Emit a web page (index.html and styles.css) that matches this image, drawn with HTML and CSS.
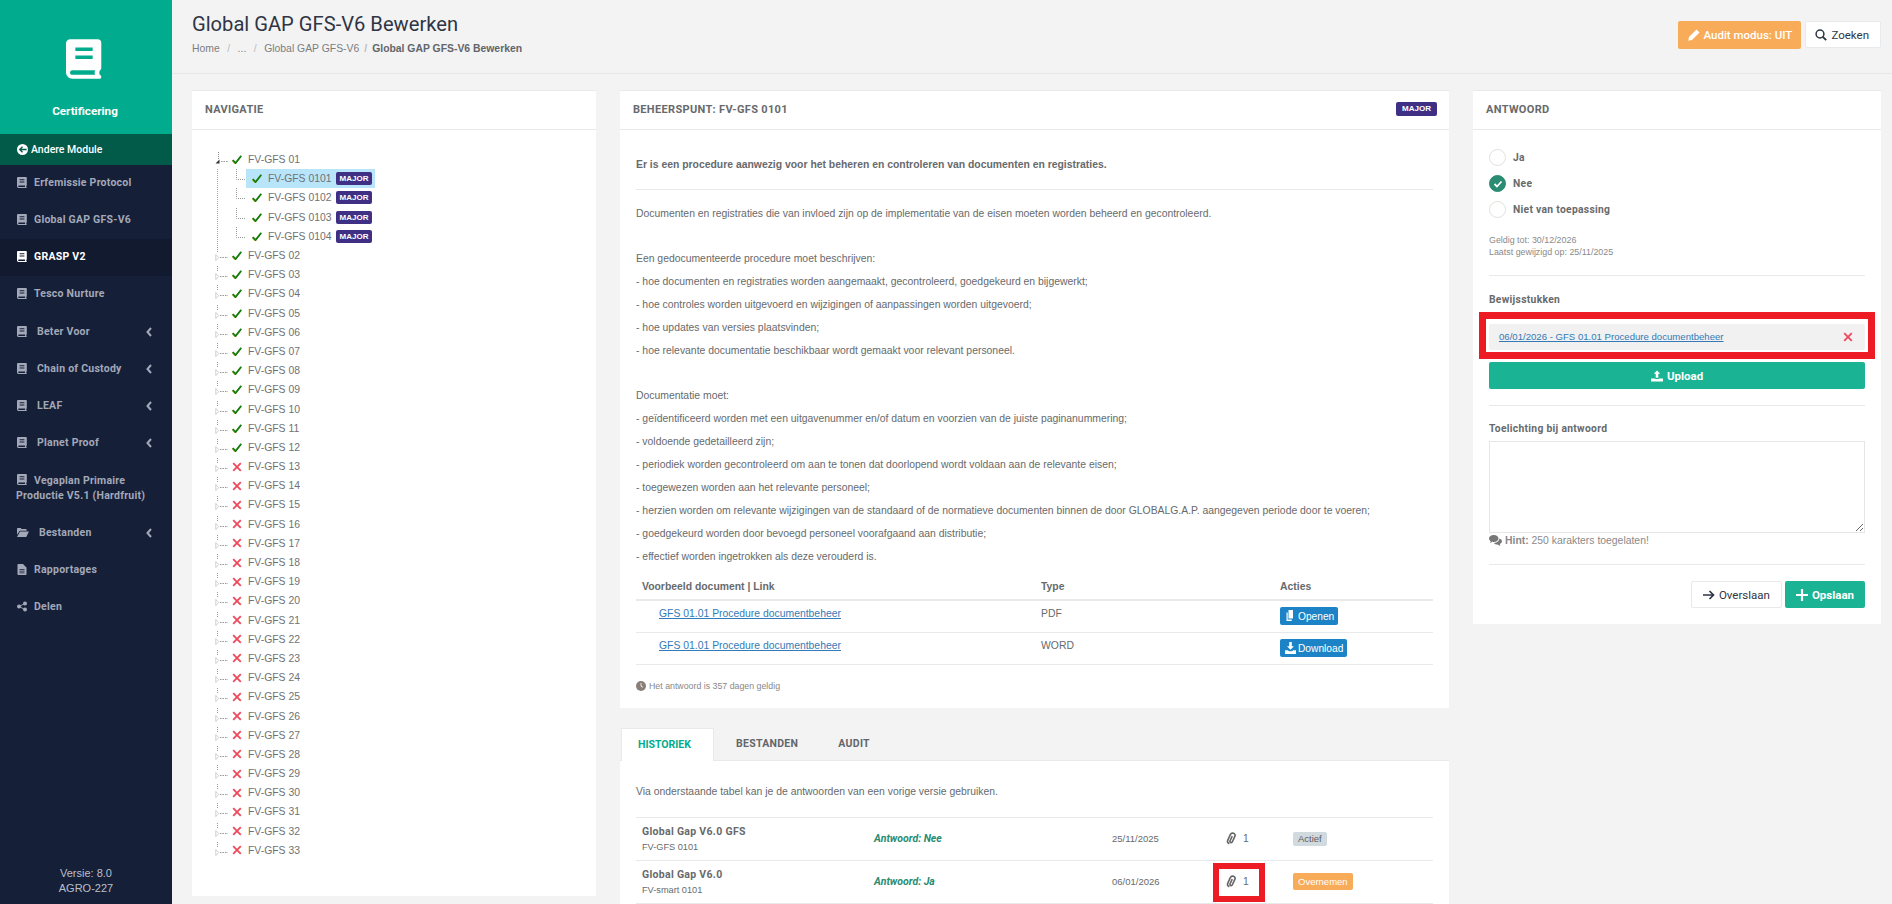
FILE: index.html
```html
<!DOCTYPE html>
<html>
  <head>
    <meta charset="utf-8" />
    <meta name="viewport" content="width=device-width, initial-scale=1.0" />
    <title>Global GAP GFS-V6 Bewerken</title>
    <link rel="stylesheet" href="styles.css">
  </head>
  <body>
    <svg class="icon-defs" xmlns="http://www.w3.org/2000/svg">
      <symbol id="i-book" viewBox="0 0 10 11"><path fill-rule="evenodd" d="M1.2 0h7.6c.6 0 1 .4 1 1v7c0 .3-.2.5-.4.7-.2.4-.2.9 0 1.2.3.2.4.4.4.6 0 .3-.2.5-.5.5H1.8C.8 11 0 10.2 0 9.2V1.2C0 .5.5 0 1.2 0zM2.6 2.3v1h4.8v-1zM2.6 4.5v1h4.8v-1zM1.8 8.6c-.9 0-.9 1.300 0 1.300h6.300c-.2-.4-.2-.9 0-1.300z"/></symbol>
      <symbol id="i-check" viewBox="0 0 10 9"><path d="M.8 5l2.800 3L9.300.8" fill="none" stroke="#b5a82a" stroke-width="1.600" transform="translate(-.4 .5)"/><path d="M.8 5l2.800 3L9.300.8" fill="none" stroke="currentColor" stroke-width="1.700"/></symbol>
      <symbol id="i-cross" viewBox="0 0 10 10"><path d="M1.200 1.200l7.600 7.600M8.800 1.200L1.200 8.800" fill="none" stroke="currentColor" stroke-width="1.900"/></symbol>
      <symbol id="i-closed" viewBox="0 0 13 17"><path d="M2.500 0v6" fill="none" stroke="#999" stroke-dasharray="1 1"/><path d="M.8 7.500l3 3-3 3z" fill="#fff" stroke="#bbb" stroke-width=".7"/><path d="M5 10.500h8" fill="none" stroke="#999" stroke-dasharray="1.500 1"/></symbol>
      <symbol id="i-open" viewBox="0 0 13 17"><path d="M3.500 1v7" fill="none" stroke="#888" stroke-dasharray="1 1"/><path d="M4.500 8.500v4H.5z" fill="#333"/><path d="M6 10.500h7" fill="none" stroke="#999" stroke-dasharray="1.500 1"/></symbol>
      <symbol id="i-elbow" viewBox="0 0 10 19"><path d="M.500 0v10.500H10" fill="none" stroke="#999" stroke-dasharray="1 1"/></symbol>
      <symbol id="i-chevron" viewBox="0 0 6 10"><path d="M5 1L1.500 5 5 9" fill="none" stroke="currentColor" stroke-width="2"/></symbol>
      <symbol id="i-pencil" viewBox="0 0 12 12"><path d="M8.500.5l3 3-7.500 7.500L.3 11.700 1 8z"/></symbol>
      <symbol id="i-search" viewBox="0 0 12 12"><circle cx="5" cy="5" r="3.900" fill="none" stroke="currentColor" stroke-width="1.500"/><path d="M7.800 7.800l3.400 3.400" stroke="currentColor" stroke-width="1.900"/></symbol>
      <symbol id="i-upload" viewBox="0 0 12 11"><path d="M6 0l3.200 3.300H7.300v4H4.700v-4H2.800zM0 8h3.800c.3.800 4.100.8 4.400 0H12v3H0z"/></symbol>
      <symbol id="i-arrow" viewBox="0 0 12 10"><path d="M0 5h10M6.500 1l4 4-4 4" fill="none" stroke="currentColor" stroke-width="1.700"/></symbol>
      <symbol id="i-plus" viewBox="0 0 11 11"><path d="M5.500 0v11M0 5.500h11" stroke="currentColor" stroke-width="2"/></symbol>
      <symbol id="i-clip" viewBox="0 0 10 12"><path d="M3 10.800C1.500 10.300 1 9 1.600 7.500l2.300-5C4.500 1.200 5.700.700 6.900 1.200S8.700 2.800 8.100 4.100L5.800 9c-.3.700-1 .9-1.600.7s-.8-.9-.5-1.600l2-4.300" fill="none" stroke="currentColor" stroke-width="1.500"/></symbol>
      <symbol id="i-copy" viewBox="0 0 10 12"><path d="M3 0h4.500v8.500H3zM1 2.500h1.200v7h4V11H1z"/></symbol>
      <symbol id="i-download" viewBox="0 0 10 11"><path d="M3.800 0h2.400v4h2L5 7.200 1.800 4h2zM0 7.500h2.500c.8 1.200 4.200 1.200 5 0H10V11H0z"/></symbol>
      <symbol id="i-clock" viewBox="0 0 10 10"><circle cx="5" cy="5" r="5"/><path d="M5 2v3.200l2 1.100" fill="none" stroke="#fff" stroke-width=".8"/></symbol>
      <symbol id="i-chat" viewBox="0 0 13 12"><path d="M4.800 0C2.200 0 0 1.500 0 3.500c0 1.100.7 2 1.700 2.700L1 8l2.300-1.300c.5.100 1 .2 1.500.2 2.600 0 4.700-1.500 4.700-3.400S7.400 0 4.800 0z"/><path d="M10.300 3.500c.2 2.200-2 4.400-5.300 4.500.7 1 2 1.500 3.500 1.500l2.900 1.500-.6-2c1.300-.6 2.200-1.600 2.200-2.800 0-1.100-1.100-2.200-2.700-2.700z"/></symbol>
      <symbol id="i-folder" viewBox="0 0 13 10"><path d="M0 1c0-.5.400-1 1-1h3l1 1.200h4.500c.5 0 1 .4 1 1V3H3L0 7.500z"/><path d="M3.300 3.800H13L10 10H0z"/></symbol>
      <symbol id="i-report" viewBox="0 0 9 11"><path fill-rule="evenodd" d="M0 .8C0 .4.400 0 .8 0h4.700L9 3.400v6.800c0 .4-.4.8-.8.8H.8c-.4 0-.8-.4-.8-.8zM2 5v.8h5V5zM2 6.700v.8h5v-.8zM2 8.400v.8h5v-.8z"/></symbol>
      <symbol id="i-share" viewBox="0 0 11 11"><circle cx="2.200" cy="5.500" r="2.200"/><circle cx="8.800" cy="2.200" r="2.200"/><circle cx="8.800" cy="8.800" r="2.200"/><path d="M2.200 5.500l6.600-3.300M2.200 5.500l6.600 3.300" stroke="currentColor" stroke-width="1"/></symbol>
    </svg>

    <div class="app">
      <aside class="sidebar">
        <div class="brand">
          <svg class="brand-logo"><use href="#i-book"/></svg>
          <span class="brand-name">Certificering</span>
        </div>
        <a class="module-back" href="#">
          <span class="back-dot"><svg viewBox="0 0 8 8"><path d="M7 4H2M4 2L2 4l2 2" fill="none" stroke="#025a49" stroke-width="1"/></svg></span>
          Andere Module
        </a>
        <nav class="side-nav">
          <a class="side-item" href="#"><svg class="side-icon"><use href="#i-book"/></svg>Erfemissie Protocol</a>
          <a class="side-item" href="#"><svg class="side-icon"><use href="#i-book"/></svg>Global GAP GFS-V6</a>
          <a class="side-item active" href="#"><svg class="side-icon"><use href="#i-book"/></svg>GRASP V2</a>
          <a class="side-item" href="#"><svg class="side-icon"><use href="#i-book"/></svg>Tesco Nurture</a>
          <a class="side-item has-sub" href="#"><svg class="side-icon"><use href="#i-book"/></svg>Beter Voor<svg class="side-chevron"><use href="#i-chevron"/></svg></a>
          <a class="side-item has-sub" href="#"><svg class="side-icon"><use href="#i-book"/></svg>Chain of Custody<svg class="side-chevron"><use href="#i-chevron"/></svg></a>
          <a class="side-item has-sub" href="#"><svg class="side-icon"><use href="#i-book"/></svg>LEAF<svg class="side-chevron"><use href="#i-chevron"/></svg></a>
          <a class="side-item has-sub" href="#"><svg class="side-icon"><use href="#i-book"/></svg>Planet Proof<svg class="side-chevron"><use href="#i-chevron"/></svg></a>
          <a class="side-item multi-line" href="#"><svg class="side-icon"><use href="#i-book"/></svg>Vegaplan Primaire Productie V5.1 (Hardfruit)</a>
          <a class="side-item has-sub" href="#"><svg class="side-icon folder"><use href="#i-folder"/></svg>Bestanden<svg class="side-chevron"><use href="#i-chevron"/></svg></a>
          <a class="side-item" href="#"><svg class="side-icon"><use href="#i-report"/></svg>Rapportages</a>
          <a class="side-item" href="#"><svg class="side-icon"><use href="#i-share"/></svg>Delen</a>
        </nav>
        <div class="side-version">
          <div>Versie: 8.0</div>
          <div>AGRO-227</div>
        </div>
      </aside>

      <div class="main">
        <header class="page-head">
          <div class="page-title">
            <h1>Global GAP GFS-V6 Bewerken</h1>
            <ol class="crumbs">
              <li>Home</li>
              <li>...</li>
              <li>Global GAP GFS-V6</li>
              <li class="current">Global GAP GFS-V6 Bewerken</li>
            </ol>
          </div>
          <div class="page-actions">
            <a class="btn btn-orange" href="#"><svg class="btn-icon"><use href="#i-pencil"/></svg>Audit modus: UIT</a>
            <a class="btn btn-white btn-search" href="#"><svg class="btn-icon"><use href="#i-search"/></svg>Zoeken</a>
          </div>
        </header>

        <div class="columns">
          <section class="panel panel-nav">
            <div class="panel-head"><h5>NAVIGATIE</h5></div>
            <ul class="tree">
              <li class="tree-node">
                <div class="tree-row"><svg class="tree-toggle"><use href="#i-open"/></svg><svg class="mark ok"><use href="#i-check"/></svg><span>FV-GFS 01</span></div>
                <ul class="tree-children">
                  <li class="tree-row child"><svg class="tree-elbow"><use href="#i-elbow"/></svg><a class="tree-anchor selected" href="#"><svg class="mark ok"><use href="#i-check"/></svg><span>FV-GFS 0101</span><b class="badge-major">MAJOR</b></a></li>
                  <li class="tree-row child"><svg class="tree-elbow"><use href="#i-elbow"/></svg><a class="tree-anchor" href="#"><svg class="mark ok"><use href="#i-check"/></svg><span>FV-GFS 0102</span><b class="badge-major">MAJOR</b></a></li>
                  <li class="tree-row child"><svg class="tree-elbow"><use href="#i-elbow"/></svg><a class="tree-anchor" href="#"><svg class="mark ok"><use href="#i-check"/></svg><span>FV-GFS 0103</span><b class="badge-major">MAJOR</b></a></li>
                  <li class="tree-row child"><svg class="tree-elbow"><use href="#i-elbow"/></svg><a class="tree-anchor" href="#"><svg class="mark ok"><use href="#i-check"/></svg><span>FV-GFS 0104</span><b class="badge-major">MAJOR</b></a></li>
                </ul>
              </li>
              <li class="tree-row"><svg class="tree-toggle"><use href="#i-closed"/></svg><svg class="mark ok"><use href="#i-check"/></svg><span>FV-GFS 02</span></li>
              <li class="tree-row"><svg class="tree-toggle"><use href="#i-closed"/></svg><svg class="mark ok"><use href="#i-check"/></svg><span>FV-GFS 03</span></li>
              <li class="tree-row"><svg class="tree-toggle"><use href="#i-closed"/></svg><svg class="mark ok"><use href="#i-check"/></svg><span>FV-GFS 04</span></li>
              <li class="tree-row"><svg class="tree-toggle"><use href="#i-closed"/></svg><svg class="mark ok"><use href="#i-check"/></svg><span>FV-GFS 05</span></li>
              <li class="tree-row"><svg class="tree-toggle"><use href="#i-closed"/></svg><svg class="mark ok"><use href="#i-check"/></svg><span>FV-GFS 06</span></li>
              <li class="tree-row"><svg class="tree-toggle"><use href="#i-closed"/></svg><svg class="mark ok"><use href="#i-check"/></svg><span>FV-GFS 07</span></li>
              <li class="tree-row"><svg class="tree-toggle"><use href="#i-closed"/></svg><svg class="mark ok"><use href="#i-check"/></svg><span>FV-GFS 08</span></li>
              <li class="tree-row"><svg class="tree-toggle"><use href="#i-closed"/></svg><svg class="mark ok"><use href="#i-check"/></svg><span>FV-GFS 09</span></li>
              <li class="tree-row"><svg class="tree-toggle"><use href="#i-closed"/></svg><svg class="mark ok"><use href="#i-check"/></svg><span>FV-GFS 10</span></li>
              <li class="tree-row"><svg class="tree-toggle"><use href="#i-closed"/></svg><svg class="mark ok"><use href="#i-check"/></svg><span>FV-GFS 11</span></li>
              <li class="tree-row"><svg class="tree-toggle"><use href="#i-closed"/></svg><svg class="mark ok"><use href="#i-check"/></svg><span>FV-GFS 12</span></li>
              <li class="tree-row"><svg class="tree-toggle"><use href="#i-closed"/></svg><svg class="mark no"><use href="#i-cross"/></svg><span>FV-GFS 13</span></li>
              <li class="tree-row"><svg class="tree-toggle"><use href="#i-closed"/></svg><svg class="mark no"><use href="#i-cross"/></svg><span>FV-GFS 14</span></li>
              <li class="tree-row"><svg class="tree-toggle"><use href="#i-closed"/></svg><svg class="mark no"><use href="#i-cross"/></svg><span>FV-GFS 15</span></li>
              <li class="tree-row"><svg class="tree-toggle"><use href="#i-closed"/></svg><svg class="mark no"><use href="#i-cross"/></svg><span>FV-GFS 16</span></li>
              <li class="tree-row"><svg class="tree-toggle"><use href="#i-closed"/></svg><svg class="mark no"><use href="#i-cross"/></svg><span>FV-GFS 17</span></li>
              <li class="tree-row"><svg class="tree-toggle"><use href="#i-closed"/></svg><svg class="mark no"><use href="#i-cross"/></svg><span>FV-GFS 18</span></li>
              <li class="tree-row"><svg class="tree-toggle"><use href="#i-closed"/></svg><svg class="mark no"><use href="#i-cross"/></svg><span>FV-GFS 19</span></li>
              <li class="tree-row"><svg class="tree-toggle"><use href="#i-closed"/></svg><svg class="mark no"><use href="#i-cross"/></svg><span>FV-GFS 20</span></li>
              <li class="tree-row"><svg class="tree-toggle"><use href="#i-closed"/></svg><svg class="mark no"><use href="#i-cross"/></svg><span>FV-GFS 21</span></li>
              <li class="tree-row"><svg class="tree-toggle"><use href="#i-closed"/></svg><svg class="mark no"><use href="#i-cross"/></svg><span>FV-GFS 22</span></li>
              <li class="tree-row"><svg class="tree-toggle"><use href="#i-closed"/></svg><svg class="mark no"><use href="#i-cross"/></svg><span>FV-GFS 23</span></li>
              <li class="tree-row"><svg class="tree-toggle"><use href="#i-closed"/></svg><svg class="mark no"><use href="#i-cross"/></svg><span>FV-GFS 24</span></li>
              <li class="tree-row"><svg class="tree-toggle"><use href="#i-closed"/></svg><svg class="mark no"><use href="#i-cross"/></svg><span>FV-GFS 25</span></li>
              <li class="tree-row"><svg class="tree-toggle"><use href="#i-closed"/></svg><svg class="mark no"><use href="#i-cross"/></svg><span>FV-GFS 26</span></li>
              <li class="tree-row"><svg class="tree-toggle"><use href="#i-closed"/></svg><svg class="mark no"><use href="#i-cross"/></svg><span>FV-GFS 27</span></li>
              <li class="tree-row"><svg class="tree-toggle"><use href="#i-closed"/></svg><svg class="mark no"><use href="#i-cross"/></svg><span>FV-GFS 28</span></li>
              <li class="tree-row"><svg class="tree-toggle"><use href="#i-closed"/></svg><svg class="mark no"><use href="#i-cross"/></svg><span>FV-GFS 29</span></li>
              <li class="tree-row"><svg class="tree-toggle"><use href="#i-closed"/></svg><svg class="mark no"><use href="#i-cross"/></svg><span>FV-GFS 30</span></li>
              <li class="tree-row"><svg class="tree-toggle"><use href="#i-closed"/></svg><svg class="mark no"><use href="#i-cross"/></svg><span>FV-GFS 31</span></li>
              <li class="tree-row"><svg class="tree-toggle"><use href="#i-closed"/></svg><svg class="mark no"><use href="#i-cross"/></svg><span>FV-GFS 32</span></li>
              <li class="tree-row"><svg class="tree-toggle"><use href="#i-closed"/></svg><svg class="mark no"><use href="#i-cross"/></svg><span>FV-GFS 33</span></li>
            </ul>
          </section>

          <div class="center-col">
            <section class="panel panel-point">
              <div class="panel-head">
                <h5>BEHEERSPUNT: FV-GFS 0101</h5>
                <b class="badge-major">MAJOR</b>
              </div>
              <div class="point-body">
                <p class="point-lead">Er is een procedure aanwezig voor het beheren en controleren van documenten en registraties.</p>
                <hr class="rule" />
                <p class="point-line">Documenten en registraties die van invloed zijn op de implementatie van de eisen moeten worden beheerd en gecontroleerd.</p>
                <p class="point-line blank"></p>
                <p class="point-line">Een gedocumenteerde procedure moet beschrijven:</p>
                <p class="point-line">- hoe documenten en registraties worden aangemaakt, gecontroleerd, goedgekeurd en bijgewerkt;</p>
                <p class="point-line">- hoe controles worden uitgevoerd en wijzigingen of aanpassingen worden uitgevoerd;</p>
                <p class="point-line">- hoe updates van versies plaatsvinden;</p>
                <p class="point-line">- hoe relevante documentatie beschikbaar wordt gemaakt voor relevant personeel.</p>
                <p class="point-line blank"></p>
                <p class="point-line">Documentatie moet:</p>
                <p class="point-line">- geïdentificeerd worden met een uitgavenummer en/of datum en voorzien van de juiste paginanummering;</p>
                <p class="point-line">- voldoende gedetailleerd zijn;</p>
                <p class="point-line">- periodiek worden gecontroleerd om aan te tonen dat doorlopend wordt voldaan aan de relevante eisen;</p>
                <p class="point-line">- toegewezen worden aan het relevante personeel;</p>
                <p class="point-line">- herzien worden om relevante wijzigingen van de standaard of de normatieve documenten binnen de door GLOBALG.A.P. aangegeven periode door te voeren;</p>
                <p class="point-line">- goedgekeurd worden door bevoegd personeel voorafgaand aan distributie;</p>
                <p class="point-line">- effectief worden ingetrokken als deze verouderd is.</p>

                <table class="doc-table">
                  <thead>
                    <tr><th>Voorbeeld document | Link</th><th>Type</th><th>Acties</th></tr>
                  </thead>
                  <tbody>
                    <tr>
                      <td class="doc-link"><a href="#">GFS 01.01 Procedure documentbeheer</a></td>
                      <td class="doc-type">PDF</td>
                      <td><a class="btn-small" href="#"><svg class="small-icon"><use href="#i-copy"/></svg>Openen</a></td>
                    </tr>
                    <tr>
                      <td class="doc-link"><a href="#">GFS 01.01 Procedure documentbeheer</a></td>
                      <td class="doc-type">WORD</td>
                      <td><a class="btn-small" href="#"><svg class="small-icon"><use href="#i-download"/></svg>Download</a></td>
                    </tr>
                  </tbody>
                </table>
                <p class="valid-note"><svg class="note-icon"><use href="#i-clock"/></svg>Het antwoord is 357 dagen geldig</p>
              </div>
            </section>

            <div class="tabs">
              <a class="tab active" href="#">HISTORIEK</a>
              <a class="tab" href="#">BESTANDEN</a>
              <a class="tab" href="#">AUDIT</a>
            </div>
            <section class="tab-body">
              <p class="tab-intro">Via onderstaande tabel kan je de antwoorden van een vorige versie gebruiken.</p>
              <table class="history">
                <tr>
                  <td class="hist-name"><strong>Global Gap V6.0 GFS</strong><small>FV-GFS 0101</small></td>
                  <td class="hist-answer">Antwoord: Nee</td>
                  <td class="hist-date">25/11/2025</td>
                  <td class="hist-files"><svg class="clip"><use href="#i-clip"/></svg>1</td>
                  <td class="hist-state"><span class="label-grey">Actief</span></td>
                </tr>
                <tr>
                  <td class="hist-name"><strong>Global Gap V6.0</strong><small>FV-smart 0101</small></td>
                  <td class="hist-answer">Antwoord: Ja</td>
                  <td class="hist-date">06/01/2026</td>
                  <td class="hist-files marked"><svg class="clip"><use href="#i-clip"/></svg>1</td>
                  <td class="hist-state"><span class="label-orange">Overnemen</span></td>
                </tr>
              </table>
            </section>
          </div>

          <section class="panel panel-answer">
            <div class="panel-head"><h5>ANTWOORD</h5></div>
            <div class="answer-body">
              <div class="radio-row"><span class="radio"></span><span>Ja</span></div>
              <div class="radio-row"><span class="radio checked"><svg viewBox="0 0 10 8"><path d="M1.500 4l2.500 2.500L8.500 1.500" fill="none" stroke="#fff" stroke-width="1.800"/></svg></span><span>Nee</span></div>
              <div class="radio-row"><span class="radio"></span><span>Niet van toepassing</span></div>
              <p class="answer-meta">Geldig tot: 30/12/2026<br>Laatst gewijzigd op: 25/11/2025</p>
              <hr class="rule" />
              <h6 class="field-label evidence-label">Bewijsstukken</h6>
              <div class="evidence">
                <a href="#">06/01/2026 - GFS 01.01 Procedure documentbeheer</a>
                <svg class="evidence-remove"><use href="#i-cross"/></svg>
              </div>
              <a class="btn btn-teal btn-block" href="#"><svg class="btn-icon"><use href="#i-upload"/></svg>Upload</a>
              <hr class="rule" />
              <h6 class="field-label">Toelichting bij antwoord</h6>
              <textarea class="answer-text"></textarea>
              <p class="hint"><svg class="hint-icon"><use href="#i-chat"/></svg><span><b>Hint:</b> 250 karakters toegelaten!</span></p>
              <hr class="rule" />
              <div class="answer-actions">
                <a class="btn btn-white" href="#"><svg class="btn-icon"><use href="#i-arrow"/></svg>Overslaan</a>
                <a class="btn btn-teal" href="#"><svg class="btn-icon"><use href="#i-plus"/></svg>Opslaan</a>
              </div>
            </div>
          </section>
        </div>
      </div>
    </div>
  </body>
</html>
```

FILE: styles.css
```css
* {
  box-sizing: border-box;
}

html,
body {
  margin: 0;
  height: 904px;
  overflow: hidden;
}

body {
  background: #f3f3f4;
  color: #676a6c;
  font-family: "Liberation Sans", Arial, sans-serif;
  font-size: 10.4px;
}

a {
  text-decoration: none;
}

.icon-defs {
  position: absolute;
  width: 0;
  height: 0;
}

.app {
  display: flex;
  height: 904px;
  overflow: hidden;
}

/* Sidebar */
.sidebar {
  width: 172px;
  flex: none;
  display: flex;
  flex-direction: column;
  background: #161f38;
}

.brand {
  height: 134px;
  background: #00ac8d;
  display: flex;
  flex-direction: column;
  align-items: center;
  padding-top: 39px;
}

.brand-logo {
  width: 36px;
  height: 40px;
  margin-right: 4px;
  fill: #fff;
}

.brand-name {
  margin-top: 25px;
  margin-right: 2px;
  color: #fff;
  font-family: Roboto, sans-serif;
  font-size: 11.7px;
  font-weight: 700;
}

.module-back {
  height: 31px;
  background: #025a49;
  color: #fff;
  display: flex;
  align-items: center;
  padding-left: 17px;
  font-family: Roboto, sans-serif;
  font-size: 10.5px;
  font-weight: 500;
}

.back-dot {
  width: 11px;
  height: 11px;
  margin-right: 3px;
  border-radius: 50%;
  background: #fff;
  display: flex;
}

.side-item {
  display: flex;
  align-items: center;
  height: 37px;
  padding: 0 16px 2px 17px;
  color: #a3a9b8;
  font-family: Roboto, sans-serif;
  font-size: 10.5px;
  font-weight: 700;
  letter-spacing: 0.25px;
}

.side-item.active {
  background: #121a2f;
  color: #fff;
}

.side-icon {
  width: 10px;
  height: 11px;
  margin-right: 7px;
  flex: none;
  fill: currentColor;
}

.side-icon.folder {
  width: 12px;
  margin-right: 8px;
}

.side-item.has-sub {
  padding-bottom: 0;
}

.side-item.has-sub .side-icon {
  margin-right: 10px;
}

.side-chevron {
  width: 6px;
  height: 10px;
  margin-left: auto;
  margin-right: 4px;
}

.side-item.multi-line {
  display: block;
  height: 53px;
  padding: 13px 10px 0 16px;
  line-height: 14.6px;
}

.multi-line ~ .side-item {
  padding-bottom: 0;
}

.multi-line .side-icon {
  vertical-align: -1px;
  margin-left: 1px;
}

.side-version {
  margin-top: auto;
  padding-bottom: 8px;
  text-align: center;
  color: #b9bfcb;
  font-size: 11px;
  line-height: 15px;
}

/* Page header */
.main {
  flex: 1;
  min-width: 0;
}

.page-head {
  height: 74px;
  border-bottom: 1px solid #e7e7e7;
  display: flex;
  justify-content: space-between;
  padding: 12px 11px 0 20px;
}

.page-title h1 {
  margin: 0;
  color: #2f3544;
  font-family: Roboto, sans-serif;
  font-size: 20.15px;
  font-weight: 400;
  line-height: 24px;
}

.crumbs {
  list-style: none;
  margin: 6px 0 0;
  padding: 0;
  display: flex;
  font-size: 10.4px;
  line-height: 14px;
  color: #7b7e80;
}

.crumbs li + li::before {
  content: "/";
  margin: 0 7.5px;
  color: #bbb;
}

.crumbs li.current::before {
  margin: 0 5px;
}

.crumbs .current {
  color: #62666a;
  font-weight: 700;
}

.page-actions {
  display: flex;
  align-items: flex-start;
  gap: 4px;
  padding-top: 9px;
}

.btn {
  display: inline-flex;
  align-items: center;
  justify-content: center;
  height: 27px;
  border-radius: 2px;
  font-family: Roboto, sans-serif;
  font-size: 11.5px;
  padding: 0 11px;
}

.btn-icon {
  width: 12px;
  height: 12px;
  margin-right: 4px;
  fill: currentColor;
}

.btn-orange {
  background: #f8ac59;
  color: #fff;
  font-weight: 500;
  height: 28px;
  padding: 0 9px 0 10px;
}

.btn-orange .btn-icon {
  margin-right: 3px;
}

.btn-white {
  background: #fff;
  border: 1px solid #e7eaec;
  color: #2f3544;
}

.btn-search {
  padding-left: 9px;
}

.btn-teal {
  background: #1ab394;
  color: #fff;
  font-weight: 700;
}

.btn-block {
  display: flex;
}

/* Columns */
.columns {
  display: grid;
  grid-template-columns: 404px 829px 408px;
  gap: 24px;
  padding: 16px 11px 0 20px;
  align-items: start;
}

.panel {
  background: #fff;
  border-top: 1px solid #e7eaec;
}

.panel-nav {
  height: 806px;
}

.panel-head {
  height: 39px;
  border-bottom: 1px solid #e7eaec;
  display: flex;
  align-items: center;
  justify-content: space-between;
  padding: 0 13px 2px;
}

.panel-head h5 {
  margin: 0;
  color: #676a6c;
  font-family: Roboto, sans-serif;
  font-size: 11px;
  font-weight: 700;
  letter-spacing: 0.33px;
}

.badge-major {
  display: inline-block;
  height: 13px;
  padding: 0 4px;
  border-radius: 2px;
  background: #3f2f85;
  color: #fff;
  font-size: 8px;
  line-height: 13px;
  font-weight: 700;
}

.panel-head .badge-major {
  height: 14px;
  padding: 0 6px;
  margin-right: -1px;
  line-height: 14px;
}

/* Tree */
.tree,
.tree-children {
  list-style: none;
  margin: 0;
  padding: 0;
}

.tree {
  padding: 20px 0 0 23px;
  font-size: 10.4px;
  color: #6f7274;
}

.tree-row {
  display: flex;
  align-items: center;
  height: 19.2px;
}

.tree-toggle {
  width: 13px;
  height: 17px;
  margin-right: 4px;
  flex: none;
}

.mark {
  width: 10px;
  height: 9px;
  margin-right: 6px;
  flex: none;
}

.mark.ok {
  color: #0b7d14;
}

.mark.no {
  height: 10px;
  color: #ed4c5f;
}

.tree-children {
  margin-left: 2px;
  padding-left: 18px;
  border-left: 1px dotted #aaa;
}

.tree-elbow {
  width: 10px;
  height: 19px;
  flex: none;
}

.tree-anchor {
  display: flex;
  align-items: center;
  height: 19px;
  padding: 0 3px 0 6px;
  color: inherit;
}

.tree-anchor.selected {
  background: #b9e5fb;
}

.tree-anchor .badge-major {
  margin-left: 4px;
}

/* Beheerspunt */
.point-body {
  padding: 23px 16px 0;
}

.point-lead {
  margin: 0;
  font-weight: 700;
  line-height: 24px;
}

.rule {
  border: 0;
  border-top: 1px solid #e7eaec;
  margin: 12px 0;
}

.point-line {
  margin: 0;
  height: 23px;
  line-height: 23px;
}

.point-line.blank {
  height: 22px;
}

.doc-table {
  width: 100%;
  margin-top: 5px;
  border-collapse: collapse;
  table-layout: fixed;
}

.doc-table th {
  height: 27px;
  border-bottom: 2px solid #e7eaec;
  padding: 0 0 0 6px;
  text-align: left;
  font-size: 10.4px;
}

.doc-table td {
  height: 32px;
  border-bottom: 1px solid #e7eaec;
  padding: 0 0 0 6px;
}

.doc-table th:first-child {
  width: 399px;
}

.doc-table th:nth-child(2) {
  width: 239px;
}

.doc-table td.doc-link {
  padding-left: 23px;
  padding-bottom: 6px;
}

.doc-table td.doc-type {
  padding-bottom: 6px;
}

.doc-link a {
  color: #337ab7;
  text-decoration: underline;
}

.btn-small {
  display: inline-flex;
  align-items: center;
  height: 18px;
  padding: 0 4px 0 5px;
  border-radius: 2px;
  background: #1c84c6;
  color: #fff;
  font-size: 10.2px;
}

.small-icon {
  width: 11px;
  height: 12px;
  margin-right: 2px;
  fill: currentColor;
}

.valid-note {
  display: flex;
  align-items: center;
  margin: 16px 0 0;
  padding-bottom: 17px;
  font-size: 8.8px;
  color: #888;
}

.note-icon {
  width: 10px;
  height: 10px;
  margin-right: 3px;
  fill: #8a7f78;
}

/* Tabs */
.tabs {
  display: flex;
  margin-top: 20px;
  height: 33px;
  border-bottom: 1px solid #e7eaec;
}

.tab {
  display: flex;
  align-items: center;
  padding: 0 18px 0 22px;
  color: #62666a;
  font-family: Roboto, sans-serif;
  font-size: 10.5px;
  font-weight: 700;
  letter-spacing: 0.3px;
}

.tab.active {
  margin-left: 1px;
  height: 33px;
  padding: 0 22px 0 16px;
  background: #fff;
  border: 1px solid #e7eaec;
  border-bottom: 0;
  color: #00ac8d;
  letter-spacing: 0;
}

.tab-body {
  background: #fff;
  padding: 0 16px;
  height: 143px;
}

.tab-intro {
  margin: 0;
  padding-top: 24px;
  line-height: 14px;
}

.history {
  width: 100%;
  margin-top: 18px;
  border-collapse: collapse;
  border-top: 1px solid #e7eaec;
}

.history td {
  height: 43px;
  padding: 0;
  border-bottom: 1px solid #e7eaec;
  vertical-align: middle;
}

.hist-name {
  width: 238px;
  padding-left: 6px !important;
}

.hist-name strong {
  display: block;
  font-family: Roboto, sans-serif;
  font-size: 10.5px;
  letter-spacing: 0.3px;
  margin-bottom: 3px;
}

.hist-name small {
  font-size: 9.2px;
}

.hist-answer {
  width: 238px;
  color: #2a8c72;
  font-family: Roboto, sans-serif;
  font-size: 10.5px;
  font-weight: 700;
  font-style: italic;
}

.hist-date {
  width: 113px;
  font-size: 9.5px;
}

.hist-files {
  width: 68px;
  position: relative;
}

.clip {
  width: 11px;
  height: 13px;
  margin: 0 6px 0 1px;
  vertical-align: -3px;
  color: #666;
}

/* rood kader uit de schermafbeelding */
.hist-files.marked::after {
  content: "";
  box-sizing: border-box;
  position: absolute;
  left: -12px;
  top: 2px;
  width: 52px;
  height: 39px;
  border: 6px solid #ed1c24;
}

.label-grey,
.label-orange {
  display: inline-block;
  border-radius: 2px;
  font-size: 9.5px;
}

.label-grey {
  padding: 0 5px;
  line-height: 14px;
  background: #d1dade;
  color: #5e5e5e;
}

.label-orange {
  padding: 0 5px;
  line-height: 17px;
  background: #f8ac59;
  color: #fff;
}

/* Antwoord */
.panel-answer {
  height: 534px;
}

.answer-body {
  padding: 19px 16px 0;
}

.radio-row {
  display: flex;
  align-items: center;
  gap: 7px;
  height: 17px;
  margin-bottom: 9px;
  font-family: Roboto, sans-serif;
  font-size: 10.3px;
  font-weight: 700;
  letter-spacing: 0.3px;
}

.radio {
  width: 17px;
  height: 17px;
  border-radius: 50%;
  border: 1px solid #e0e0dc;
  background: #fff;
  display: flex;
  align-items: center;
  justify-content: center;
}

.radio.checked {
  background: #2a8c72;
  border-color: #2a8c72;
}

.radio svg {
  width: 10px;
  height: 8px;
}

.answer-meta {
  margin: 16px 0 0;
  color: #8a8a8a;
  font-size: 8.9px;
  line-height: 12px;
}

.answer-meta + .rule {
  margin: 17px 0 17px;
}

.field-label {
  margin: 0 0 5px;
  font-family: Roboto, sans-serif;
  font-size: 10.3px;
  font-weight: 700;
  letter-spacing: 0.3px;
  color: #676a6c;
  line-height: 14px;
}

.evidence-label {
  margin-bottom: 17px;
}

.evidence {
  position: relative;
  height: 26px;
  border-radius: 2px;
  background: #f1f1f1;
  display: flex;
  align-items: center;
  justify-content: space-between;
  padding: 0 12px 0 10px;
  margin-bottom: 12px;
}

.evidence a {
  margin-bottom: 2px;
  color: #337ab7;
  font-size: 9.6px;
  text-decoration: underline;
}

.evidence-remove {
  width: 10px;
  height: 10px;
  color: #ed4c5f;
}

/* rood kader uit de schermafbeelding */
.evidence::after {
  content: "";
  position: absolute;
  inset: -12px -10px -9px;
  border: 7px solid #ed1c24;
}

.btn-block + .rule {
  margin: 16px 0 16px;
}

.answer-text {
  display: block;
  width: 100%;
  height: 92px;
  border: 1px solid #e5e6e7;
  margin: 0;
}

.hint {
  display: flex;
  align-items: center;
  margin: 1px 0 0;
  color: #8a8a8a;
  line-height: 13px;
}

.hint-icon {
  width: 13px;
  height: 12px;
  margin-right: 3px;
  fill: #777;
}

.hint + .rule {
  margin: 17px 0 16px;
}

.answer-actions {
  display: flex;
  justify-content: flex-end;
  gap: 3px;
}
```
